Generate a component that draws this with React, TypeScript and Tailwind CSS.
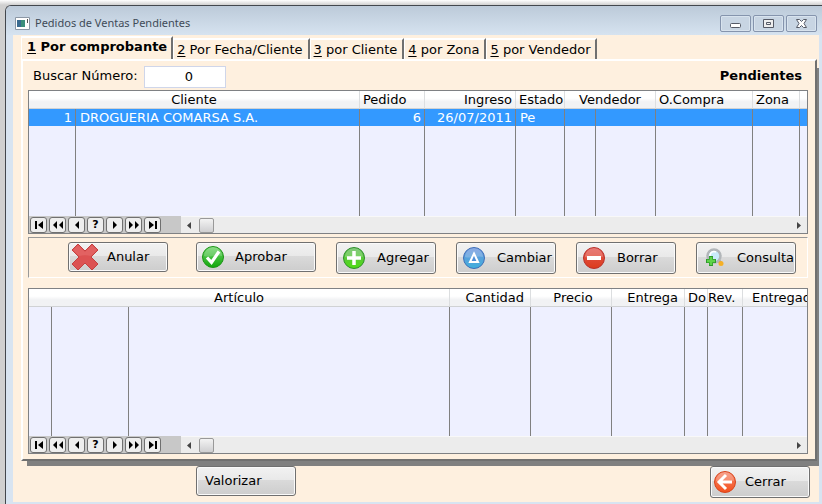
import React from 'react';

type Tab = { key: string; label: string };

const tabs: Tab[] = [
  { key: '1', label: 'Por comprobante' },
  { key: '2', label: 'Por Fecha/Cliente' },
  { key: '3', label: 'por Cliente' },
  { key: '4', label: 'por Zona' },
  { key: '5', label: 'por Vendedor' },
];

const navButtons = [
  { name: 'Primero', d: 'M3 3h2v8H3zM11 3v8L6 7z' },
  { name: 'Página anterior', d: 'M6 3v8L2 7zM12 3v8L8 7z' },
  { name: 'Anterior', d: 'M9 3v8L5 7z' },
  { name: 'Buscar', d: '' },
  { name: 'Siguiente', d: 'M5 3v8l4-4z' },
  { name: 'Página siguiente', d: 'M2 3v8l4-4zM8 3v8l4-4z' },
  { name: 'Último', d: 'M3 3v8l5-4zM9 3h2v8H9z' },
];

const face =
  'bg-[linear-gradient(#f2f2f2_0%,#e9e9e9_46%,#dadada_47%,#cdcdcd_100%)] border border-[#707070] rounded-[3px] shadow-[inset_0_0_0_1px_#fafafa]';

const thClass = 'h-[18px] p-0 px-[3px] pt-px font-normal whitespace-nowrap overflow-hidden border-r border-r-[#dcdee0] border-b border-b-[#d0d2d4]';
const tdClass = 'p-0 px-[3px] whitespace-nowrap border-r border-[#808080]';

function CrossIcon() {
  return (
    <svg width="28" height="28" viewBox="0 0 28 28">
      <path d="M7 1l7 7 7-7 6 6-7 7 7 7-6 6-7-7-7 7-6-6 7-7-7-7z" fill="#dc5252" stroke="#c44141" strokeLinejoin="round" />
      <path d="M7 2l7 7 7-7 5 5-6 6c-4-1-8-1-12 0L2 7z" fill="#ec7a7a" opacity=".4" />
    </svg>
  );
}

function Ball({ id, from, to, edge, children }: { id: string; from: string; to: string; edge: string; children: React.ReactNode }) {
  return (
    <svg width="24" height="24" viewBox="0 0 24 24">
      <defs>
        <linearGradient id={id} x1="0" y1="0" x2="0" y2="1">
          <stop offset="0" stopColor={from} />
          <stop offset="1" stopColor={to} />
        </linearGradient>
      </defs>
      <circle cx="12" cy="12" r="10.5" fill={`url(#${id})`} stroke={edge} />
      <path d="M3 11a9 9 0 0 1 18 0c-5-2-12 2-18 0z" fill="#fff" opacity=".2" />
      {children}
    </svg>
  );
}

const CheckIcon = () => (
  <Ball id="check" from="#6fd46a" to="#12a80c" edge="#1d9418">
    <path d="M6 12.5l4.500 5L18 6.500" fill="none" stroke="#fff" strokeWidth="3.200" />
  </Ball>
);

const PlusIcon = () => (
  <Ball id="plus" from="#63b95c" to="#4fdc12" edge="#2f8f2c">
    <path d="M12 5v14M5 12h14" stroke="#fff" strokeWidth="3.500" />
  </Ball>
);

const DeltaIcon = () => (
  <Ball id="delta" from="#6f93dc" to="#3fb0dc" edge="#3f6fb8">
    <path d="M12 7.500l4 8.500H8z" fill="#4f90d8" stroke="#fff" strokeWidth="2" />
  </Ball>
);

const MinusIcon = () => (
  <Ball id="minus" from="#e25a55" to="#dc3c1c" edge="#b8322c">
    <path d="M5 12h14" stroke="#fff" strokeWidth="4" />
  </Ball>
);

const BackIcon = () => (
  <Ball id="back" from="#f58a70" to="#f4501c" edge="#d8441c">
    <path d="M13 5l-7 7 7 7M6 12h13" fill="none" stroke="#fff" strokeWidth="3" />
  </Ball>
);

function LensIcon() {
  return (
    <svg width="20" height="20" viewBox="0 0 20 20">
      <path d="M12 11l4 4" stroke="#9a9a9a" strokeWidth="3" />
      <circle cx="9" cy="8" r="6.500" fill="#c9ebfa" stroke="#b2b6b9" strokeWidth="2.500" />
      <path d="M5 8a4 4 0 0 1 6-4" fill="none" stroke="#fff" strokeWidth="1.500" />
      <circle cx="16" cy="15.500" r="2.500" fill="#f5b027" />
      <path d="M6 8v10M1 13h10" stroke="#2f9a2c" strokeWidth="4" />
      <path d="M6 9v8M2 13h8" stroke="#5fd44a" strokeWidth="2.500" />
    </svg>
  );
}

const actions = [
  { label: 'Anular', icon: CrossIcon, box: 'w-[100px] h-[30px] pl-[2px]', slot: 'w-9' },
  { label: 'Aprobar', icon: CheckIcon, box: 'w-[120px] h-[30px] ml-2 pl-1', slot: 'w-[34px]' },
  { label: 'Agregar', icon: PlusIcon, box: 'w-[100px] h-8 pl-[5px]', slot: 'w-[35px]' },
  { label: 'Cambiar', icon: DeltaIcon, box: 'w-[100px] h-8 pl-[5px]', slot: 'w-[35px]' },
  { label: 'Borrar', icon: MinusIcon, box: 'w-[100px] h-8 pl-[5px]', slot: 'w-[35px]' },
  { label: 'Consulta', icon: LensIcon, box: 'w-[100px] h-8 pl-2', slot: 'w-8' },
];

function TitleBar() {
  return (
    <header className="flex h-[29px] items-start justify-between bg-linear-to-b from-[#bccad9] to-[#d6e3f0] pl-[9px] pr-[5px]">
      <div className="flex items-center gap-[5px] pt-[9px]">
        <svg width="15" height="13" viewBox="0 0 15 13">
          <path d="M.5.5h14v12H.5z" fill="#fff" stroke="#8b97a5" />
          <path d="M2 3h8v7H2z" fill="#3c8f7c" />
          <path d="M2 3h4v7H2z" fill="#3a6b90" />
          <path d="M12 2h1v4h-1z" fill="#555" />
        </svg>
        <h1 className="font-['Noto_Sans','Open_Sans',sans-serif] text-[11px] leading-4 text-[#3f4b58]">Pedidos de Ventas Pendientes</h1>
      </div>
      <div className="flex gap-[2px] pt-[9px]">
        {['Minimizar', 'Maximizar', 'Cerrar ventana'].map((name, i) => (
          <button key={name} aria-label={name} className="flex h-[17px] w-[31px] items-center justify-center rounded-[2px] border border-[#8594ad] bg-[#c8d5e3] shadow-[inset_0_0_0_1px_#d8e3ee]">
            <svg width="13" height="11" viewBox="0 0 13 11">
              {i === 0 && <rect x="1.500" y="5.500" width="10" height="4" rx="1" fill="#fff" stroke="#555a66" />}
              {i === 1 && <path d="M1.500 1.500h10v8h-10zM4.500 4.500h4v2h-4z" fill="#eee" stroke="#555a66" />}
              {i === 2 && <path d="M1.500 1.500h3l2 2 2-2h3L9 5.500l2.500 4h-3l-2-2-2 2h-3L4 5.500z" fill="#fff" stroke="#555a66" />}
            </svg>
          </button>
        ))}
      </div>
    </header>
  );
}

function BrowseBar() {
  return (
    <div className="flex h-[17px] bg-[#ececec]">
      <div className="flex w-[152px] gap-[2px] bg-[#c8c8c8] pl-px pt-px">
        {navButtons.map((nav) => (
          <button key={nav.name} aria-label={nav.name} className="flex h-4 w-[17px] items-center justify-center rounded-[3px] border border-[#707070] bg-[#eeeeee] text-[11px] leading-3 font-bold">
            {nav.d ? (
              <svg width="14" height="14" viewBox="0 0 14 14" className="shrink-0"><path d={nav.d} /></svg>
            ) : '?'}
          </button>
        ))}
      </div>
      <div className="flex flex-1 items-center border-t border-[#f8f8f8] pl-[6px] pr-[6px]">
        <svg width="4" height="7" viewBox="0 0 4 7"><path d="M4 0v7L0 3.500z" fill="#444" /></svg>
        <div className="ml-2 h-[15px] w-[15px] rounded-[2px] border border-[#999] bg-linear-to-b from-[#f3f3f3] to-[#cfcfd1]" />
        <svg width="4" height="7" viewBox="0 0 4 7" className="ml-auto"><path d="M0 0v7l4-3.500z" fill="#444" /></svg>
      </div>
    </div>
  );
}

function PedidosTable() {
  return (
    <div className="overflow-hidden border border-[#7f8184] bg-[#eef0ff]">
      <table className="w-full table-fixed border-separate border-spacing-0">
        <colgroup>
          <col className="w-[47px]" /><col /><col className="w-[65px]" /><col className="w-[91px]" /><col className="w-[49px]" />
          <col className="w-[31px]" /><col className="w-[60px]" /><col className="w-[97px]" /><col className="w-[47px]" /><col className="w-[7px]" />
        </colgroup>
        <thead className="bg-linear-to-b from-white from-40% to-[#f1f2f4] to-60%">
          <tr>
            <th colSpan={2} className={thClass}>Cliente</th>
            <th className={`${thClass} text-left`}>Pedido</th>
            <th className={`${thClass} text-right`}>Ingreso</th>
            <th className={`${thClass} text-left`}>Estado</th>
            <th colSpan={2} className={thClass}>Vendedor</th>
            <th className={`${thClass} text-left`}>O.Compra</th>
            <th className={`${thClass} text-left`}>Zona</th>
            <td className="border-b border-[#d0d2d4] p-0" />
          </tr>
        </thead>
        <tbody>
          <tr className="h-[17px] bg-[#3399ff] text-white">
            <td className={`${tdClass} text-right`}>1</td>
            <td className={`${tdClass} pl-1`}>DROGUERIA COMARSA S.A.</td>
            <td className={`${tdClass} text-right`}>6</td>
            <td className={`${tdClass} text-right`}>26/07/2011</td>
            <td className={`${tdClass} pl-1`}>Pe</td>
            <td className={tdClass} />
            <td className={tdClass} />
            <td className={tdClass} />
            <td className={tdClass} />
            <td className="p-0" />
          </tr>
          <tr className="h-[90px]">
            {Array.from({ length: 9 }, (_, i) => <td key={i} className={tdClass} />)}
            <td className="p-0" />
          </tr>
        </tbody>
      </table>
      <BrowseBar />
    </div>
  );
}

function ArticulosTable() {
  return (
    <div className="overflow-hidden border border-[#7f8184] bg-[#eef0ff]">
      <table className="w-full table-fixed border-separate border-spacing-0">
        <colgroup>
          <col className="w-[23px]" /><col className="w-[77px]" /><col /><col className="w-[81px]" /><col className="w-[81px]" />
          <col className="w-[73px]" /><col className="w-[23px]" /><col className="w-[35px]" /><col className="w-[64px]" />
        </colgroup>
        <thead className="bg-linear-to-b from-white from-40% to-[#f1f2f4] to-60%">
          <tr>
            <th colSpan={3} className={thClass}>Artículo</th>
            <th className={`${thClass} pr-[6px] text-right`}>Cantidad</th>
            <th className={`${thClass} pl-[7px]`}>Precio</th>
            <th className={`${thClass} pr-[6px] text-right`}>Entrega</th>
            <th className={`${thClass} text-left`}>Do</th>
            <th className="h-[18px] border-r border-b border-r-[#dcdee0] border-b-[#d0d2d4] p-0 pt-px text-left font-normal">Rev.</th>
            <th className="h-[18px] overflow-hidden border-b border-[#d0d2d4] p-0 pt-px pl-[9px] text-left font-normal whitespace-nowrap">Entregado</th>
          </tr>
        </thead>
        <tbody>
          <tr className="h-[129px]">
            {Array.from({ length: 8 }, (_, i) => <td key={i} className={tdClass} />)}
            <td className="p-0" />
          </tr>
        </tbody>
      </table>
      <BrowseBar />
    </div>
  );
}

export default function App() {
  const [active, setActive] = React.useState('1');

  return (
    <div className="bg-linear-to-b from-white to-[#d0d0d0] to-[5px] pt-[5px] pl-[5px] font-['DejaVu_Sans',Verdana,sans-serif] text-[13px] leading-4 text-black">
      <div className="overflow-hidden rounded-tl-[6px] border-t border-l border-[#43474d] bg-[#d8e4f1]">
        <TitleBar />
        <main className="mr-[3px] mb-[3px] ml-[7px] overflow-hidden bg-[#fef0df] pt-px pr-[2px] pb-1 pl-2">
          <div role="tablist" className="flex items-end">
            {tabs.map((tab) => (
              <button
                key={tab.key}
                role="tab"
                aria-selected={active === tab.key}
                onClick={() => setActive(tab.key)}
                className={`border-t-2 border-r-2 border-l border-t-white border-r-[#707070] border-l-white whitespace-nowrap ${
                  active === tab.key ? 'h-[23px] pr-1 pb-1 pl-[5px] font-bold' : 'h-[21px] pr-[5px] pl-[3px]'
                }`}
              >
                <span className="underline underline-offset-2">{tab.key}</span> {tab.label}
              </button>
            ))}
          </div>

          <div className="border-2 border-t-white border-r-[#707070] border-b-[#707070] border-l-white px-[5px] pb-[5px] shadow-[4px_7px_0_-2px_#808080]">
            <div className="flex h-[29px] items-center justify-between pr-2 pl-[5px]">
              <div className="flex items-center">
                <label htmlFor="numero" className="w-[111px]">Buscar Número:</label>
                <input id="numero" defaultValue="0" className="mt-[2px] h-[22px] w-[82px] border border-[#cfd6ea] bg-white pl-2 text-center outline-none" />
              </div>
              <strong>Pendientes</strong>
            </div>

            <div className="mr-[2px]">
              <PedidosTable />
              <div className="mt-[3px] flex h-[41px] items-start justify-center gap-5 border border-t-[#999] border-r-white border-b-white border-l-[#999] pt-1 pl-[28px]">
                {actions.map(({ label, icon: Icon, box, slot }) => (
                  <button key={label} className={`${face} ${box} flex shrink-0 items-center overflow-hidden`}>
                    <span className={`${slot} flex shrink-0`}>
                      <Icon />
                    </span>
                    <span>{label}</span>
                  </button>
                ))}
              </div>
              <div className="mt-[10px]">
                <ArticulosTable />
              </div>
            </div>
          </div>

          <footer className="mt-[5px] flex items-start justify-between pr-[7px] pl-[175px]">
            <button className={`${face} h-[30px] w-[100px] pl-2 text-left`}>Valorizar</button>
            <button className={`${face} flex h-8 w-[100px] items-center pl-[2px]`}>
              <span className="flex w-8 shrink-0"><BackIcon /></span>
              Cerrar
            </button>
          </footer>
        </main>
      </div>
    </div>
  );
}
